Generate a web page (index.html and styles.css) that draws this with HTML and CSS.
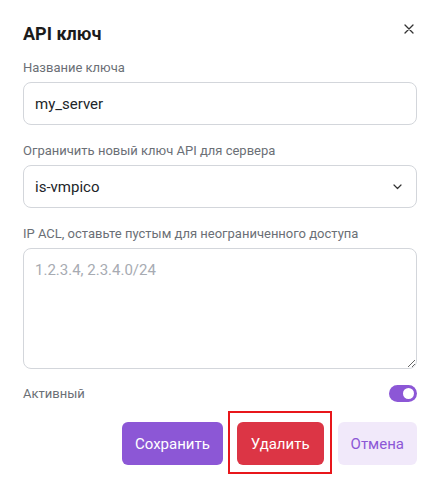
FILE: index.html
```html
<!DOCTYPE html>
<html lang="ru">
<head>
<meta charset="UTF-8">
<meta name="viewport" content="width=device-width, initial-scale=1.0">
<title>API ключ</title>
<link rel="stylesheet" href="styles.css">
</head>
<body>

<div class="modal">
  <div class="modal-header">
    <h3>API ключ</h3>
    <button class="close" aria-label="Закрыть">
      <svg width="10" height="10" viewBox="0 0 10 10"><path d="M1 1L9 9M9 1L1 9" stroke="#333" stroke-width="1.3" stroke-linecap="round"/></svg>
    </button>
  </div>

  <div class="field">
    <label for="keyName">Название ключа</label>
    <input type="text" id="keyName" class="control" value="my_server">
  </div>

  <div class="field">
    <label for="server">Ограничить новый ключ API для сервера</label>
    <div class="select-wrap">
      <select id="server" class="control">
        <option>is-vmpico</option>
      </select>
      <svg class="chevron" width="9" height="6" viewBox="0 0 9 6"><path d="M1 1L4.5 4.5L8 1" fill="none" stroke="#333" stroke-width="1.2" stroke-linecap="round" stroke-linejoin="round"/></svg>
    </div>
  </div>

  <div class="field">
    <label for="acl">IP ACL, оставьте пустым для неограниченного доступа</label>
    <textarea id="acl" class="control" placeholder="1.2.3.4, 2.3.4.0/24"></textarea>
  </div>

  <div class="switch-row">
    <span>Активный</span>
    <span class="switch"><span class="knob"></span></span>
  </div>

  <div class="actions">
    <button class="btn btn-save">Сохранить</button>
    <span class="highlight">
      <button class="btn btn-delete">Удалить</button>
    </span>
    <button class="btn btn-cancel">Отмена</button>
  </div>
</div>

</body>
</html>
```

FILE: styles.css
```css
body {
  margin: 0;
  background-color: #fff;
  font-family: Roboto, "Liberation Sans", sans-serif;
  color: #212529;
}

.modal {
  width: 394px;
  padding: 0 17px 23px 23px;
}

.modal-header {
  display: flex;
  justify-content: space-between;
  align-items: flex-start;
  height: 60px;
}

.modal-header h3 {
  margin: 0;
  padding-top: 23px;
  font-size: 18px;
  font-weight: 700;
  line-height: 22px;
  color: #1b1b1b;
}

.close {
  border: none;
  background: none;
  padding: 0;
  margin: 23px 2px 0 0;
  width: 12px;
  height: 12px;
  display: flex;
  align-items: center;
  justify-content: center;
  cursor: pointer;
}

.field {
  margin-bottom: 18px;
}

.field label {
  display: block;
  font-size: 13px;
  line-height: 16px;
  color: #6b6f76;
  margin-bottom: 6px;
}

.control {
  display: block;
  box-sizing: border-box;
  width: 100%;
  height: 43px;
  padding: 0 11px;
  border: 1px solid #d3d6db;
  border-radius: 8px;
  background: #fff;
  font-family: inherit;
  font-size: 15px;
  color: #212529;
  outline: none;
}

select.control {
  appearance: none;
  -webkit-appearance: none;
}

.select-wrap {
  position: relative;
}

.chevron {
  position: absolute;
  right: 15px;
  top: 19px;
  pointer-events: none;
}

textarea.control {
  height: 121px;
  padding: 11px 11px;
  line-height: 20px;
  resize: vertical;
}

textarea.control::placeholder {
  color: #a7abb2;
}

.switch-row {
  display: flex;
  justify-content: space-between;
  align-items: center;
  margin-top: -3px;
  height: 18px;
  font-size: 13px;
  color: #6b6f76;
}

.switch {
  display: flex;
  align-items: center;
  justify-content: flex-end;
  box-sizing: border-box;
  width: 28px;
  height: 17px;
  padding: 0 3px;
  border-radius: 9px;
  background-color: #8c57d6;
}

.knob {
  width: 11px;
  height: 11px;
  border-radius: 50%;
  background-color: #fff;
}

.actions {
  display: flex;
  justify-content: flex-end;
  gap: 14px;
  margin-top: 20px;
}

.btn {
  display: block;
  height: 43px;
  padding: 0 14px;
  border: none;
  border-radius: 6px;
  font-family: inherit;
  font-size: 15px;
  cursor: pointer;
}

.btn-save {
  background-color: #8c57d6;
  color: #fff;
  padding: 0 13px;
}

.btn-delete {
  background-color: #dc3545;
  color: #fff;
}

/* red frame drawn over the delete button */
.highlight {
  position: relative;
}

.highlight::after {
  content: "";
  position: absolute;
  top: -11px;
  right: -8px;
  bottom: -9px;
  left: -9px;
  border: 2px solid #e8161b;
  pointer-events: none;
}

.btn-cancel {
  background-color: #f1e9fa;
  color: #8c57d6;
  padding: 0 13px;
}
```
